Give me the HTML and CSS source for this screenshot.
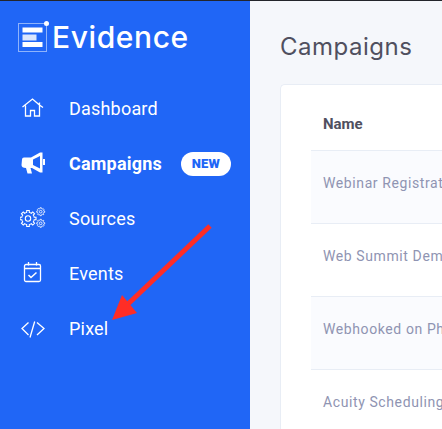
FILE: index.html
```html
<!DOCTYPE html>
<html>
<head>
	<title>Campaigns</title>
	<meta charset="utf-8">
	<link rel="stylesheet" href="styles.css">
</head>
<body>
<div class="app">
	<div class="sidebar">
		<div class="logo">
			<svg width="32" height="32" viewBox="0 0 32 32">
				<rect x="0.500" y="2.500" width="28" height="28" fill="none" stroke="#8fb3fb" stroke-width="1"/>
				<path d="M4.500 6.500h20v5h-20zM4.500 21h20v5h-20z" fill="#fff"/>
				<path d="M4.500 13.500h14v6h-14z" fill="#dbe6fd"/>
				<circle cx="28.500" cy="2.500" r="2.500" fill="#fff"/>
			</svg>
			<span>Evidence</span>
		</div>
		<ul class="nav">
			<li>
				<svg class="nav_icon" width="24" height="24" viewBox="0 0 24 24" fill="none" stroke="#fff" stroke-width="1.300">
					<path d="M1.500 10l10-8 7 6v-2.500M18.500 8l3.500 2.500M4.500 8.500v10.500h5v-5.500h4v5.500h5v-10.500"/>
				</svg>
				<span>Dashboard</span>
			</li>
			<li class="active">
				<svg class="nav_icon" width="24" height="24" viewBox="0 0 24 24" fill="#fff">
					<path d="M1 7.500q0-2 2-2h7l9-5h2.500v20h-2.500l-8-4.500h-1.500l1.500 5.500h-4.500l-1.500-5.500q-4.500 0-4.500-3zM19 4l-7 3.500v5.500l7 3.500z"/>
					<rect x="22" y="7" width="2" height="6"/>
				</svg>
				<span>Campaigns</span>
				<b class="badge">NEW</b>
			</li>
			<li>
				<svg class="nav_icon gears" width="26" height="24" viewBox="0 0 26 24" fill="none" stroke="#fff">
					<defs>
						<g id="tooth">
							<path d="M-2.680-6.470L-1.460-6.850L-1.410-8.890L1.410-8.890L1.460-6.850L2.680-6.470" vector-effect="non-scaling-stroke"/>
						</g>
						<g id="gear">
							<use href="#tooth"/>
							<use href="#tooth" transform="rotate(45)"/>
							<use href="#tooth" transform="rotate(90)"/>
							<use href="#tooth" transform="rotate(135)"/>
							<use href="#tooth" transform="rotate(180)"/>
							<use href="#tooth" transform="rotate(225)"/>
							<use href="#tooth" transform="rotate(270)"/>
							<use href="#tooth" transform="rotate(315)"/>
							<circle r="3" vector-effect="non-scaling-stroke"/>
						</g>
					</defs>
					<use href="#gear" stroke-width="1.100" transform="translate(8 11.500) scale(.9)"/>
					<use href="#gear" stroke-width="0.800" transform="translate(20.700 4.700) scale(.45)"/>
					<use href="#gear" stroke-width="0.800" transform="translate(20.700 16.300) scale(.45)"/>
				</svg>
				<span>Sources</span>
			</li>
			<li>
				<svg class="nav_icon" width="24" height="24" viewBox="0 0 24 24" fill="none" stroke="#fff" stroke-width="1.300">
					<rect x="3.500" y="2.500" width="16" height="17" rx="1.500"/>
					<path d="M3.500 6.500h16M7.500 0v3.500M15.500 0v3.500"/>
					<path d="M7.500 13l2.500 2.500 5.500-5" stroke-width="1.500"/>
				</svg>
				<span>Events</span>
			</li>
			<li>
				<svg class="nav_icon" width="24" height="24" viewBox="0 0 24 24" fill="none" stroke="#fff" stroke-width="1.300">
					<path d="M7.500 5.500l-6.500 6 6.500 6.500M16 5.500l7 6-7 6.500M13.700 4.500l-4.700 16"/>
				</svg>
				<span>Pixel</span>
			</li>
		</ul>
	</div>
	<div class="main">
		<h1>Campaigns</h1>
		<div class="card">
			<div class="th">Name</div>
			<div class="row odd">Webinar Registrat</div>
			<div class="row">Web Summit Dem</div>
			<div class="row odd">Webhooked on Ph</div>
			<div class="row">Acuity Scheduling</div>
		</div>
	</div>
</div>
<!-- red arrow drawn over the screenshot -->
<svg class="arrow" width="442" height="429" viewBox="0 0 442 429">
	<path d="M210 226L128 304" stroke="#ff2d26" stroke-width="5" fill="none"/>
	<path d="M112 320L122 295L137 313z" fill="#ff2d26"/>
</svg>
</body>
</html>
```

FILE: styles.css
```css
*{
	margin: 0px;
	padding: 0px;
	box-sizing: border-box;
}
html, body{
	height: 100%;
	overflow: hidden;
}
body{
	font-family: Roboto, sans-serif;
	border-top: 1px solid #23252b;
}
.app{
	display: flex;
	height: 100%;
}
.sidebar{
	width: 250px;
	flex-shrink: 0;
	background-color: #2066f6;
	color: #fff;
}
.logo{
	display: flex;
	align-items: center;
	gap: 2px;
	padding-left: 18px;
	height: 72px;
	font-family: Inter, sans-serif;
	font-size: 30px;
	font-weight: 500;
	letter-spacing: 0.6px;
}
.nav{
	list-style: none;
	padding-top: 8px;
}
.nav li{
	display: flex;
	align-items: center;
	height: 55px;
	padding-left: 21px;
	font-size: 18px;
	letter-spacing: 0.2px;
}
.nav_icon{
	flex-shrink: 0;
	margin-right: 24px;
}
.gears{
	margin-left: -1px;
	margin-right: 23px;
}
.active{
	font-weight: 700;
}
.badge{
	margin-left: 19px;
	width: 50px;
	height: 24px;
	line-height: 24px;
	border-radius: 12px;
	background-color: #fff;
	color: #2066f6;
	font-size: 13px;
	text-align: center;
}
.main{
	flex: 1;
	min-width: 0;
	display: flex;
	flex-direction: column;
	background-color: #f5f7fb;
	padding-left: 30px;
}
h1{
	height: 83px;
	padding-top: 32px;
	font-family: Inter, sans-serif;
	font-size: 24px;
	font-weight: 400;
	line-height: 28px;
	letter-spacing: 0.5px;
	color: #50505f;
}
.card{
	flex: 1;
	min-height: 0;
	overflow: hidden;
	padding-left: 30px;
	background-color: #fff;
	border: 1px solid #e8edf5;
	border-width: 1px 0px 0px 1px;
	border-top-left-radius: 5px;
}
.th{
	height: 66px;
	padding: 30px 0px 0px 12px;
	font-size: 15px;
	font-weight: 700;
	line-height: 18px;
	color: #50505f;
	border-bottom: 1px solid #e8edf5;
}
.row{
	height: 73px;
	padding: 23px 0px 0px 12px;
	font-size: 14px;
	line-height: 18px;
	letter-spacing: 0.6px;
	color: #8f94b2;
	white-space: nowrap;
	overflow: hidden;
	border-bottom: 1px solid #e8edf5;
}
.row:last-child{
	height: auto;
	border-bottom: none;
}
.odd{
	background-color: #fafbfe;
}
.arrow{
	position: absolute;
	top: 0px;
	left: 0px;
}
```
